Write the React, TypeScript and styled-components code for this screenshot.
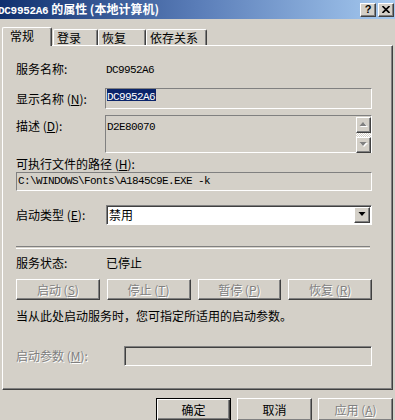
import React from "react";
import styled, { createGlobalStyle, css } from "styled-components";

const GlobalStyle = createGlobalStyle`
  html, body {
    margin: 0;
    padding: 0;
    background: #d4d0c8;
  }
  body {
    font-family: "Noto Sans CJK SC", "Liberation Sans", sans-serif;
    font-size: 12px;
    color: #000;
  }
`;

const raised = css`
  border: 1px solid;
  border-color: #fff #404040 #404040 #fff;
  box-shadow: inset -1px -1px #808080;
  background: #d4d0c8;
`;

const disabledText = css`
  color: #808080;
  text-shadow: 1px 1px 0 #fff;
`;

const Window = styled.div`
  width: 395px;
  height: 420px;
  overflow: hidden;
  background: #d4d0c8;
  display: flex;
  flex-direction: column;
`;

const TitleBar = styled.div`
  flex: none;
  height: 19px;
  display: flex;
  align-items: center;
  justify-content: space-between;
  padding-right: 1px;
  background: linear-gradient(90deg, #10306f 0%, #5a7db8 50%, #a6caf0 100%);
`;

const Title = styled.div`
  margin-left: -2px;
  color: #fff;
  font-weight: bold;
  font-size: 12px;
  line-height: 19px;
  white-space: nowrap;
`;

const Mono = styled.span<{ $bold?: boolean }>`
  font-family: "Liberation Mono", "DejaVu Sans Mono", monospace;
  font-size: 11px;
  letter-spacing: ${(p) => (p.$bold ? "-0.3px" : "-0.6px")};
  font-weight: ${(p) => (p.$bold ? "bold" : "normal")};
`;

const CaptionButtons = styled.div`
  display: flex;
  gap: 2px;
`;

const CaptionButton = styled.div`
  ${raised};
  box-sizing: border-box;
  width: 16px;
  height: 14px;
  display: flex;
  align-items: center;
  justify-content: center;
  font-family: "Liberation Sans", sans-serif;
  font-weight: bold;
  font-size: 11px;
  line-height: 1;
`;

const Body = styled.div`
  padding: 8px 2px 0 2px;
  display: flex;
  flex-direction: column;
`;

const TabRow = styled.div`
  height: 18px;
  display: flex;
  align-items: flex-end;
`;

const Tab = styled.div<{ $w: number; $active?: boolean; $ml?: number }>`
  position: relative;
  box-sizing: border-box;
  width: ${(p) => p.$w}px;
  margin-left: ${(p) => p.$ml ?? 0}px;
  height: ${(p) => (p.$active ? 19 : 16)}px;
  margin-bottom: ${(p) => (p.$active ? -1 : 0)}px;
  z-index: ${(p) => (p.$active ? 2 : 0)};
  padding-left: ${(p) => (p.$active ? 7 : 3)}px;
  border-left: 1px solid #fff;
  border-top: 1px solid #fff;
  border-right: 1px solid #404040;
  border-top-left-radius: 2px;
  border-top-right-radius: 2px;
  box-shadow: inset -1px 0 #808080;
  background: #d4d0c8;
  line-height: ${(p) => (p.$active ? 16 : 15)}px;
  white-space: nowrap;
`;

const Panel = styled.div`
  box-sizing: border-box;
  height: 345px;
  border: 1px solid;
  border-color: #fff #404040 #404040 #fff;
  box-shadow: inset -1px -1px #808080;
  padding: 15px 20px 0 13px;
  display: flex;
  flex-direction: column;
`;

const Row = styled.div<{ $mt?: number; $label?: number; $top?: boolean }>`
  display: grid;
  grid-template-columns: ${(p) => p.$label ?? 89}px 1fr;
  align-items: ${(p) => (p.$top ? "start" : "center")};
  margin-top: ${(p) => p.$mt ?? 0}px;
`;

const Label = styled.div<{ $pt?: number; $disabled?: boolean }>`
  line-height: 14px;
  padding-top: ${(p) => p.$pt ?? 0}px;
  white-space: nowrap;
  ${(p) => p.$disabled && disabledText};
`;

const Value = styled.div`
  line-height: 14px;
  padding-left: 1px;
`;

const TextLine = styled.div<{ $mt?: number }>`
  line-height: 14px;
  margin-top: ${(p) => p.$mt ?? 0}px;
  white-space: nowrap;
`;

const Flat = styled.div<{ $h: number; $pt?: number }>`
  box-sizing: border-box;
  height: ${(p) => p.$h}px;
  border: 1px solid;
  border-color: #808080 #fff #fff #808080;
  padding: ${(p) => p.$pt ?? 0}px 0 0 1px;
  line-height: 13px;
  white-space: nowrap;
  position: relative;
  display: flex;
`;

const Sunken = styled.div<{ $h: number; $white?: boolean }>`
  box-sizing: border-box;
  height: ${(p) => p.$h}px;
  border: 1px solid;
  border-color: #808080 #fff #fff #808080;
  box-shadow: inset 1px 1px #404040;
  background: ${(p) => (p.$white ? "#fff" : "#d4d0c8")};
  display: flex;
  align-items: center;
`;

const Selected = styled.span`
  background: #0a246a;
  color: #fff;
  padding: 0 1px 0 0;
  line-height: 12px;
  height: 12px;
  display: inline-block;
`;

const FlatText = styled.div`
  flex: 1;
`;

const ScrollBar = styled.div`
  width: 15px;
  display: flex;
  flex-direction: column;
  margin-top: -1px;
  margin-bottom: -1px;
`;

const ScrollButton = styled.div`
  ${raised};
  box-sizing: border-box;
  height: 16px;
  display: flex;
  align-items: center;
  justify-content: center;
`;

const ScrollTrack = styled.div`
  flex: 1;
  background-image: repeating-conic-gradient(#fff 0 25%, #d4d0c8 0 50%);
  background-size: 2px 2px;
`;

const ComboText = styled.div`
  flex: 1;
  padding-left: 2px;
  line-height: 14px;
`;

const ComboButton = styled.div`
  ${raised};
  box-sizing: border-box;
  width: 16px;
  height: 16px;
  margin-right: 1px;
  display: flex;
  align-items: center;
  justify-content: center;
`;

const Separator = styled.div<{ $mt: number }>`
  margin-top: ${(p) => p.$mt}px;
  margin-right: 2px;
  height: 1px;
  border-top: 1px solid #808080;
  border-bottom: 1px solid #fff;
`;

const ButtonGrid = styled.div<{ $mt: number }>`
  margin-top: ${(p) => p.$mt}px;
  display: grid;
  grid-template-columns: repeat(4, 1fr);
  gap: 7px;
`;

const Button = styled.div<{ $disabled?: boolean; $default?: boolean; $w?: number; $h?: number }>`
  ${raised};
  box-sizing: border-box;
  height: ${(p) => p.$h ?? 21}px;
  width: ${(p) => (p.$w ? `${p.$w}px` : "auto")};
  display: flex;
  align-items: center;
  justify-content: center;
  line-height: 14px;
  ${(p) => p.$disabled && disabledText};
  ${(p) =>
    p.$default &&
    css`
      border: 1px solid #000;
      box-shadow: inset 1px 1px #fff, inset -1px -1px #404040,
        inset -2px -2px #808080;
    `}
`;

const Footer = styled.div`
  margin-top: 8px;
  display: flex;
  justify-content: flex-end;
  gap: 6px;
`;

const Arrow = ({ up, disabled }: { up?: boolean; disabled?: boolean }) => (
  <svg width="9" height="6" viewBox="0 0 9 6">
    {disabled && (
      <polygon
        points={up ? "5,1 9,5 1,5" : "1,1 9,1 5,5"}
        fill="#fff"
      />
    )}
    <polygon
      points={up ? "4,0 7.5,4 0.5,4" : "0.5,0 7.5,0 4,4"}
      fill={disabled ? "#808080" : "#000"}
    />
  </svg>
);

const CloseGlyph = () => (
  <svg width="8" height="7" viewBox="0 0 8 7">
    <path d="M0.5 0 L7.5 7 M7.5 0 L0.5 7" stroke="#000" strokeWidth="1.6" />
  </svg>
);

export default function App() {
  return (
    <>
      <GlobalStyle />
      <Window>
        <TitleBar>
          <Title>
            <Mono $bold>DC9952A6</Mono> 的属性 (本地计算机)
          </Title>
          <CaptionButtons>
            <CaptionButton>?</CaptionButton>
            <CaptionButton>
              <CloseGlyph />
            </CaptionButton>
          </CaptionButtons>
        </TitleBar>
        <Body>
          <TabRow>
            <Tab $w={50} $active>
              常规
            </Tab>
            <Tab $w={45} $ml={1}>
              登录
            </Tab>
            <Tab $w={48}>
              恢复
            </Tab>
            <Tab $w={61}>
              依存关系
            </Tab>
          </TabRow>
          <Panel>
            <Row>
              <Label>服务名称:</Label>
              <Value>
                <Mono>DC9952A6</Mono>
              </Value>
            </Row>
            <Row $mt={11}>
              <Label>
                显示名称 (<u>N</u>):
              </Label>
              <Flat $h={21}>
                <Selected>
                  <Mono>DC9952A6</Mono>
                </Selected>
              </Flat>
            </Row>
            <Row $mt={6} $top>
              <Label $pt={4}>
                描述 (<u>D</u>):
              </Label>
              <Flat $h={38} $pt={2}>
                <FlatText>
                  <Mono>D2E80070</Mono>
                </FlatText>
                <ScrollBar>
                  <ScrollButton>
                    <Arrow up disabled />
                  </ScrollButton>
                  <ScrollTrack />
                  <ScrollButton>
                    <Arrow disabled />
                  </ScrollButton>
                </ScrollBar>
              </Flat>
            </Row>
            <TextLine $mt={4}>
              可执行文件的路径 (<u>H</u>):
            </TextLine>
            <Flat $h={19} $pt={2} style={{ marginTop: 1 }}>
              <Mono>C:\WINDOWS\Fonts\A1845C9E.EXE -k</Mono>
            </Flat>
            <Row $mt={14}>
              <Label>
                启动类型 (<u>E</u>):
              </Label>
              <Sunken $h={20} $white style={{ marginLeft: 1 }}>
                <ComboText>禁用</ComboText>
                <ComboButton>
                  <Arrow />
                </ComboButton>
              </Sunken>
            </Row>
            <Separator $mt={21} />
            <Row $mt={7}>
              <Label>服务状态:</Label>
              <Value>已停止</Value>
            </Row>
            <ButtonGrid $mt={9}>
              <Button $disabled>
                启动 (<u>S</u>)
              </Button>
              <Button $disabled>
                停止 (<u>T</u>)
              </Button>
              <Button $disabled>
                暂停 (<u>P</u>)
              </Button>
              <Button $disabled>
                恢复 (<u>R</u>)
              </Button>
            </ButtonGrid>
            <TextLine $mt={9}>
              当从此处启动服务时，您可指定所适用的启动参数。
            </TextLine>
            <Row $mt={23} $label={108}>
              <Label $disabled>
                启动参数 (<u>M</u>):
              </Label>
              <Sunken $h={20} />
            </Row>
          </Panel>
          <Footer>
            <Button $default $w={75} $h={23}>
              确定
            </Button>
            <Button $w={75} $h={23}>
              取消
            </Button>
            <Button $w={75} $h={23} $disabled>
              应用 (<u>A</u>)
            </Button>
          </Footer>
        </Body>
      </Window>
    </>
  );
}
